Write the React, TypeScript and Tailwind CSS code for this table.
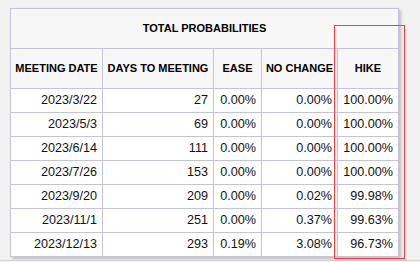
import React from "react";

const rows = [
  ["2023/3/22", "27", "0.00%", "0.00%", "100.00%"],
  ["2023/5/3", "69", "0.00%", "0.00%", "100.00%"],
  ["2023/6/14", "111", "0.00%", "0.00%", "100.00%"],
  ["2023/7/26", "153", "0.00%", "0.00%", "100.00%"],
  ["2023/9/20", "209", "0.00%", "0.02%", "99.98%"],
  ["2023/11/1", "251", "0.00%", "0.37%", "99.63%"],
  ["2023/12/13", "293", "0.19%", "3.08%", "96.73%"],
];

export default function App() {
  const th =
    "border border-[#c4c4d8] bg-[#f7f7f7] text-center font-bold text-[11px] text-black h-[40px] px-0 p-0";
  const td =
    "border border-[#c4c4d8] bg-white text-right text-[12.6px] text-[#111] h-[24px] p-0 pr-[5px]";
  return (
    <div
      className="relative w-[420px] h-[262px] bg-[#f2f2f2] overflow-hidden"
      style={{ fontFamily: '"Liberation Sans", Arial, sans-serif' }}
    >
      <div className="pt-[8px] pl-[10px]">
        <table className="border-collapse table-fixed w-[388px] shadow-[2px_2px_3px_rgba(0,0,0,0.22)]">
          <colgroup>
            <col className="w-[92px]" />
            <col className="w-[111px]" />
            <col className="w-[48px]" />
            <col className="w-[76px]" />
            <col className="w-[61px]" />
          </colgroup>
          <thead>
            <tr>
              <th colSpan={5} className={th}>
                TOTAL PROBABILITIES
              </th>
            </tr>
            <tr>
              <th className={th}>MEETING DATE</th>
              <th className={th}>DAYS TO MEETING</th>
              <th className={th}>EASE</th>
              <th className={th}>NO CHANGE</th>
              <th className={th}>HIKE</th>
            </tr>
          </thead>
          <tbody>
            {rows.map((r, i) => (
              <tr key={i}>
                {r.map((c, j) => (
                  <td key={j} className={td}>
                    {c}
                  </td>
                ))}
              </tr>
            ))}
          </tbody>
        </table>
      </div>
      <div className="absolute left-0 right-0 top-[260px] h-[2px] border-t border-[#d2d2d2] bg-[#f6f6f6]" />
      <div className="absolute left-[334px] top-[25px] w-[71px] h-[234px] border border-[#ff3b3b]" />
    </div>
  );
}
